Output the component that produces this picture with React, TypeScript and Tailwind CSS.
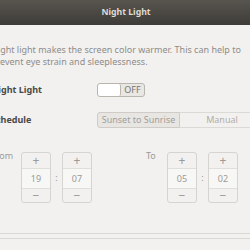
import React from 'react';

function Spinner({ value }: { value: string }) {
  return (
    <div className="flex w-[30px] shrink-0 flex-col rounded-[3px] border border-[#d6d4d0] bg-[#f2f1f0] text-[#9c9a96]">
      <div className="flex h-[16px] items-center justify-center border-b border-[#e0deda] text-[12px] leading-none">+</div>
      <div className="flex h-[20px] items-center justify-center border-b border-[#e0deda] bg-[#f7f7f6] text-[9px]">{value}</div>
      <div className="flex h-[13px] items-center justify-center text-[12px] leading-none">−</div>
    </div>
  );
}

export default function App() {
  return (
    <div
      className="relative h-[250px] w-[250px] overflow-hidden bg-[#f2f1f0]"
      style={{ fontFamily: '"Noto Sans", "DejaVu Sans", sans-serif' }}
    >
      {/* header bar */}
      <div className="flex h-[25px] items-center justify-center bg-gradient-to-b from-[#58554f] to-[#3e3c38] pl-[2px] text-[8.7px] font-bold text-[#dedad2]">
        Night Light
      </div>

      <div className="ml-[-9px] flex w-[300px] flex-col">
        <p className="mt-[19px] whitespace-nowrap text-[9px] leading-[12px] text-[#8e8c89]">
          Night light makes the screen color warmer. This can help to
          <br />
          prevent eye strain and sleeplessness.
        </p>

        <div className="mt-[15px] flex h-[14px] items-center">
          <span className="w-[106px] shrink-0 text-[9px] font-bold text-[#4a4946]">Night Light</span>
          <div className="flex h-[14px] w-[48px] shrink-0 overflow-hidden rounded-[3px] border border-[#b9b6b0] bg-[#e9e7e4]">
            <div className="w-[23px] rounded-[2px] border-r border-[#b9b6b0] bg-white" />
            <div className="flex flex-1 items-center justify-center text-[9px] text-[#777572]">OFF</div>
          </div>
        </div>

        <div className="mt-[15px] flex h-[16px] items-center">
          <span className="w-[106px] shrink-0 text-[9px] font-bold text-[#4a4946]">Schedule</span>
          <div className="flex h-[16px] shrink-0 whitespace-nowrap text-[9px]">
            <div className="flex w-[83px] shrink-0 items-center justify-center rounded-l-[3px] border border-[#cfccc7] bg-[#e8e6e3] text-[#a09e9a]">
              Sunset to Sunrise
            </div>
            <div className="flex w-[84px] shrink-0 items-center justify-center border-y border-[#dcdad6] bg-[#f2f1f0] text-[#b0aeaa]">
              Manual
            </div>
          </div>
        </div>

        <div className="mt-[24px] flex">
          <span className="mt-[-2px] w-[30px] shrink-0 text-[9px] leading-[12px] text-[#9c9a96]">From</span>
          <Spinner value="19" />
          <span className="flex w-[11px] shrink-0 items-center justify-center pt-[1px] text-[9px] text-[#9c9a96]">:</span>
          <Spinner value="07" />
          <span className="ml-[54px] mt-[-2px] w-[21px] shrink-0 text-[9px] leading-[12px] text-[#9c9a96]">To</span>
          <Spinner value="05" />
          <span className="flex w-[11px] shrink-0 items-center justify-center pt-[1px] text-[9px] text-[#9c9a96]">:</span>
          <Spinner value="02" />
        </div>
      </div>

      <div className="mt-[30px] h-[1px] bg-[#dad8d4]" />
      <div className="mt-[4px] h-[1px] bg-[#dad8d4]" />
    </div>
  );
}
